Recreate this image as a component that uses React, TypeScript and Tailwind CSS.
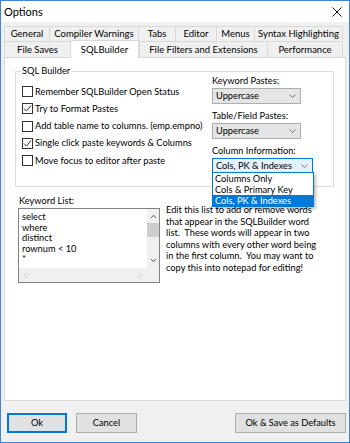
import { ChevronDown, ChevronUp, ChevronLeft, ChevronRight } from "lucide-react";

const row1 = [
  { label: "General", w: "w-[45px]" },
  { label: "Compiler Warnings", w: "w-[89px]" },
  { label: "Tabs", w: "w-[37px]" },
  { label: "Editor", w: "w-[41px]" },
  { label: "Menus", w: "w-[38px]" },
  { label: "Syntax Highlighting", w: "w-[89px]" },
];

const row2 = [
  { label: "File Saves", w: "w-[66px]" },
  { label: "SQLBuilder", w: "w-[69px]", active: true },
  { label: "File Filters and Extensions", w: "w-[128px]" },
  { label: "Performance", w: "w-[76px]" },
];

const checks = [
  { label: "Remember SQLBuilder Open Status", on: false },
  { label: "Try to Format Pastes", on: true },
  { label: "Add table name to columns. (emp.empno)", on: false },
  { label: "Single click paste keywords & Columns", on: true },
  { label: "Move focus to editor after paste", on: false },
];

function Checkbox({ on }: { on: boolean }) {
  return (
    <span className="grid h-[11px] w-[11px] shrink-0 place-items-center border border-[#333] bg-white">
      {on && (
        <svg width="9" height="9" viewBox="0 0 9 9" fill="none">
          <path d="M1 4.5 L3.5 7 L8 1.5" stroke="#333" strokeWidth="1" />
        </svg>
      )}
    </span>
  );
}

function Select({ value, focused, w }: { value: string; focused?: boolean; w: string }) {
  return (
    <div
      className={`flex h-[16px] items-center justify-between whitespace-nowrap border pl-[3px] pr-[4px] ${w} ${
        focused ? "border-[#0078d7] bg-[#e5f1fb]" : "border-[#adadad] bg-[#e5e5e5]"
      }`}
    >
      <span>{value}</span>
      <svg width="7" height="4" viewBox="0 0 7 4" fill="none">
        <path d="M0.5 0.5 L3.5 3.5 L6.5 0.5" stroke="#666" strokeWidth="0.9" />
      </svg>
    </div>
  );
}

export default function App() {
  return (
    <div className="flex h-[443px] w-[350px] flex-col border border-[#3b86da] bg-[#f0f0f0] font-['Lato',sans-serif] text-[9.25px] leading-[12px] text-black">
      <div className="flex h-[21px] items-center justify-between bg-white pl-[3px] pr-[7px]">
        <span className="text-[11px]">Options</span>
        <svg width="10" height="10" viewBox="0 0 10 10" fill="none">
          <path d="M0.5 0.5 L9.5 9.5 M9.5 0.5 L0.5 9.5" stroke="#111" strokeWidth="1" />
        </svg>
      </div>

      <div className="mt-[4px] px-[3px]">
        <div className="flex h-[15px] text-[9.5px]">
          {row1.map((t, i) => (
            <div
              key={t.label}
              className={`flex items-center justify-center whitespace-nowrap border-t border-l border-[#d9d9d9] ${t.w} ${
                i === row1.length - 1 ? "border-r" : ""
              }`}
            >
              {t.label}
            </div>
          ))}
        </div>
        <div className="flex h-[16px] items-end text-[9.5px]">
          {row2.map((t, i) =>
            t.active ? (
              <div
                key={t.label}
                className={`relative z-10 -mb-px flex h-[18px] items-center justify-center whitespace-nowrap border-x border-t border-[#d9d9d9] bg-white ${t.w}`}
              >
                {t.label}
              </div>
            ) : (
              <div
                key={t.label}
                className={`flex h-[16px] items-center justify-center whitespace-nowrap border-t border-l border-[#d9d9d9] ${t.w} ${
                  i === row2.length - 1 ? "border-r" : ""
                }`}
              >
                {t.label}
              </div>
            )
          )}
        </div>

        <div className="h-[344px] border border-[#d9d9d9] bg-white">
          <div className="relative ml-[10px] mt-[13px] flex h-[116px] w-[319px] border border-[#dcdcdc]">
            <span className="absolute -top-[7px] left-[5px] bg-white px-[1px]">SQL Builder</span>
            <div className="flex w-[196px] flex-col pl-[6px] pt-[11px]">
              {checks.map((c) => (
                <div key={c.label} className="flex h-[17.25px] items-center gap-[2px] whitespace-nowrap">
                  <Checkbox on={c.on} />
                  <span>{c.label}</span>
                </div>
              ))}
            </div>
            <div className="relative flex flex-col whitespace-nowrap pt-[3px]">
              <span className="h-[13px]">Keyword Pastes:</span>
              <Select value="Uppercase" w="w-[89px]" />
              <span className="mt-[6px] h-[13px]">Table/Field Pastes:</span>
              <Select value="Uppercase" w="w-[89px]" />
              <span className="mt-[6px] h-[13px]">Column Information:</span>
              <Select value="Cols, PK & Indexes" focused w="w-[101px]" />
              <div className="absolute left-0 top-[100px] z-20 flex w-[102px] flex-col border border-[#0078d7] bg-white leading-[11px] shadow-[2px_2px_3px_rgba(0,0,0,0.25)]">
                <span className="pl-[2px]">Columns Only</span>
                <span className="pl-[2px]">Cols &amp; Primary Key</span>
                <span className="bg-[#0078d7] pl-[2px] text-white">Cols, PK &amp; Indexes</span>
              </div>
            </div>
          </div>

          <div className="mt-[8px] flex">
            <div className="ml-[13px] flex flex-col">
              <span className="ml-[1px] h-[13px]">Keyword List:</span>
              <div className="flex h-[75px] w-[142px] flex-col border border-[#828282]">
                <div className="flex flex-1">
                  <div className="flex-1 pl-[3px] pt-[3px] leading-[10.6px]">
                    <div>select</div>
                    <div>where</div>
                    <div>distinct</div>
                    <div>rownum &lt; 10</div>
                    <div>*</div>
                  </div>
                  <div className="flex w-[12px] flex-col items-center bg-[#f0f0f0]">
                    <ChevronUp size={9} strokeWidth={2.5} color="#444" className="mt-[3px]" />
                    <div className="mt-[2px] h-[14px] w-[12px] bg-[#cdcdcd]" />
                    <div className="flex-1" />
                    <ChevronDown size={9} strokeWidth={2.5} color="#444" className="mb-[3px]" />
                  </div>
                </div>
                <div className="flex h-[14px]">
                  <div className="flex flex-1 items-center justify-between bg-[#f0f0f0] px-[2px]">
                    <ChevronLeft size={9} strokeWidth={2} color="#c0c0c0" />
                    <ChevronRight size={9} strokeWidth={2} color="#c0c0c0" />
                  </div>
                  <div className="w-[12px] bg-[#f0f0f0]" />
                </div>
              </div>
            </div>
            <p className="ml-[6px] mt-[9px] whitespace-nowrap leading-[11.6px]">
              Edit this list to add or remove words
              <br />
              that appear in the SQLBuilder word
              <br />
              list.&nbsp; These words will appear in two
              <br />
              columns with every other word being
              <br />
              in the first column.&nbsp; You may want to
              <br />
              copy this into notepad for editing!
            </p>
          </div>
        </div>
      </div>

      <div className="mt-[12px] flex px-[6px]">
        <button className="h-[20px] w-[60px] border-2 border-[#0078d7] bg-[#e1e1e1]">Ok</button>
        <button className="ml-[9px] h-[20px] w-[61px] border border-[#adadad] bg-[#e1e1e1]">Cancel</button>
        <button className="ml-auto mr-[-3px] h-[20px] w-[111px] border border-[#adadad] bg-[#e1e1e1]">
          Ok &amp; Save as Defaults
        </button>
      </div>
    </div>
  );
}
